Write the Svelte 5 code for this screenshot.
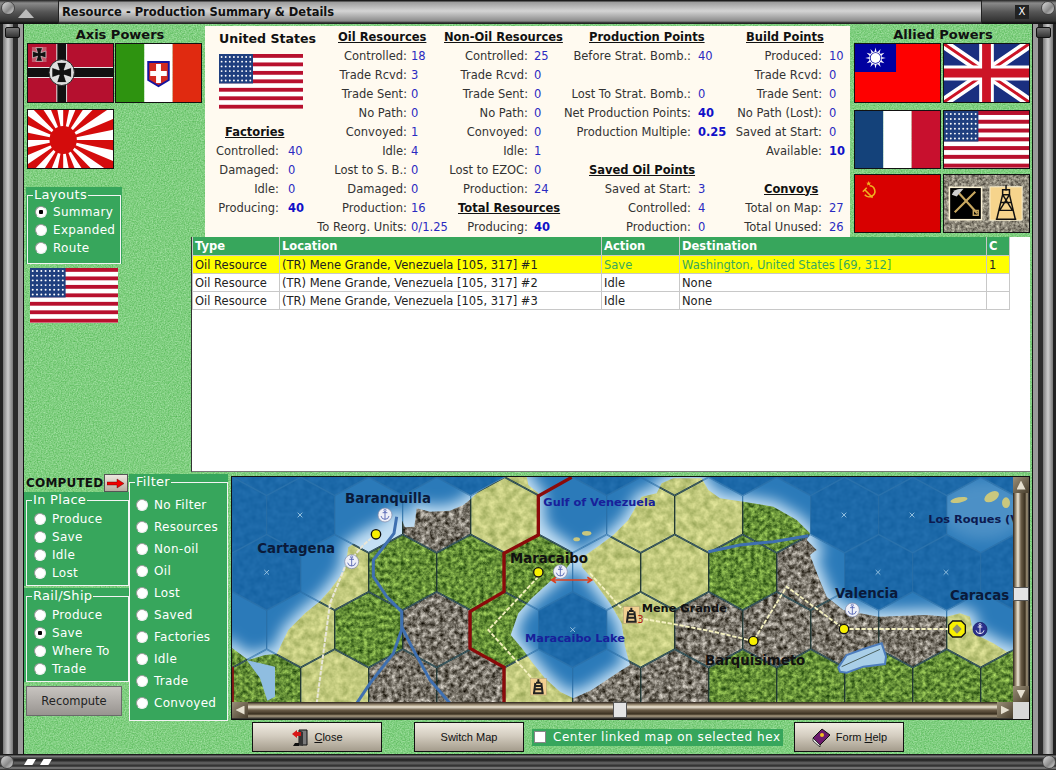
<script>
  let layout = $state('Summary')
  let inPlace = $state('')
  let railShip = $state('Save')
  let filter = $state('')
  let centerLinked = $state(false)

  const colA = [
    { h: 'Factories', x: 20 },
    { l: 'Controlled', v: '40' },
    { l: 'Damaged', v: '0' },
    { l: 'Idle', v: '0' },
    { l: 'Producing', v: '40', b: true }
  ]
  const colB = [
    { h: 'Oil Resources', x: 26 },
    { l: 'Controlled', v: '18' },
    { l: 'Trade Rcvd', v: '3' },
    { l: 'Trade Sent', v: '0' },
    { l: 'No Path', v: '0' },
    { l: 'Convoyed', v: '1' },
    { l: 'Idle', v: '4' },
    { l: 'Lost to S. B.', v: '0' },
    { l: 'Damaged', v: '0' },
    { l: 'Production', v: '16' },
    { l: 'To Reorg. Units', v: '0/1.25' }
  ]
  const colC = [
    { h: 'Non-Oil Resources', x: 4 },
    { l: 'Controlled', v: '25' },
    { l: 'Trade Rcvd', v: '0' },
    { l: 'Trade Sent', v: '0' },
    { l: 'No Path', v: '0' },
    { l: 'Convoyed', v: '0' },
    { l: 'Idle', v: '1' },
    { l: 'Lost to EZOC', v: '0' },
    { l: 'Production', v: '24' },
    { h: 'Total Resources', x: 18 },
    { l: 'Producing', v: '40', b: true }
  ]
  const colD = [
    { h: 'Production Points', x: 24 },
    { l: 'Before Strat. Bomb.', v: '40' },
    {},
    { l: 'Lost To Strat. Bomb.', v: '0' },
    { l: 'Net Production Points', v: '40', b: true },
    { l: 'Production Multiple', v: '0.25', b: true },
    {},
    { h: 'Saved Oil Points', x: 24 },
    { l: 'Saved at Start', v: '3' },
    { l: 'Controlled', v: '4' },
    { l: 'Production', v: '0' }
  ]
  const colE = [
    { h: 'Build Points', x: 21 },
    { l: 'Produced', v: '10' },
    { l: 'Trade Rcvd', v: '0' },
    { l: 'Trade Sent', v: '0' },
    { l: 'No Path (Lost)', v: '0' },
    { l: 'Saved at Start', v: '0' },
    { l: 'Available', v: '10', b: true },
    {},
    { h: 'Convoys', x: 39 },
    { l: 'Total on Map', v: '27' },
    { l: 'Total Unused', v: '26' }
  ]

  const units = [
    { n: 1, action: 'Save', dest: 'Washington, United States [69, 312]', c: '1', sel: true },
    { n: 2, action: 'Idle', dest: 'None', c: '' },
    { n: 3, action: 'Idle', dest: 'None', c: '' }
  ]

  // map is authored in 3x units, offset so it lines up with the hex grid
  const hexPts = (x, y) =>
    `${x},${y - 112} ${x + 102},${y - 57} ${x + 102},${y + 57} ${x},${y + 112} ${x - 102},${y + 57} ${x - 102},${y - 57}`

  const grid = [
    [-2, 'ddddsdsddddd'],
    [-1, 'dd.gs.ssfdd.'],
    [0, 'dsfffssfgddd'],
    [1, 'fsfgfdsggggs'],
    [2, 'fsggsggfffff']
  ]
  const hexes = grid.flatMap(([r, s]) =>
    [...s].map((t, k) => ({
      t,
      x: (r % 2 ? 8 : 110) + 204 * k,
      y: 307 + 172 * r,
      pts: hexPts((r % 2 ? 8 : 110) + 204 * k, 307 + 172 * r)
    }))
  )
  const ofType = (t) => hexes.filter((h) => h.t === t)

  const coast =
    '0,700 0,530 55,570 105,555 140,552 175,480 225,430 268,395 300,360 345,300 355,232 410,195 470,165 495,135 515,150 525,172 553,170 560,115 600,125 660,122 700,105 722,88 745,65 790,40 830,20 890,20 895,45 925,70 925,100 930,170 975,210 1020,240 1028,270 1005,300 965,330 905,385 865,430 842,495 880,540 905,575 945,625 990,665 1030,685 1085,660 1130,630 1175,600 1200,585 1185,530 1175,460 1140,400 1085,325 1055,290 1060,260 1110,225 1150,195 1195,150 1235,80 1280,70 1295,40 1330,25 1415,25 1435,60 1470,85 1540,95 1630,110 1700,150 1740,190 1730,210 1760,240 1740,255 1765,320 1790,380 1840,420 1945,440 2090,435 2150,440 2190,430 2220,440 2230,490 2290,520 2330,545 2350,540 2360,700'

  const rays = Array.from({ length: 16 }, (_, i) => {
    const a = (i * 22.5 * Math.PI) / 180
    const b = ((i * 22.5 + 11.25) * Math.PI) / 180
    return `0,0 ${95 * Math.cos(a)},${95 * Math.sin(a)} ${95 * Math.cos(b)},${95 * Math.sin(b)}`
  })
  const sunRays = Array.from({ length: 12 }, (_, i) => i * 30)
  const stars = Array.from({ length: 48 }, (_, i) => ({ x: 2.6 + (i % 8) * 4.1, y: 3 + Math.floor(i / 8) * 4.8 }))
  const stripes = [0, 2, 4, 6, 8, 10, 12]
  const ironCross = 'M-2,-2 L-4,-8 H4 L2,-2 L8,-4 V4 L2,2 L4,8 H-4 L-2,2 L-8,4 V-4 Z'
</script>

{#snippet usFlag()}
  <svg class="fill" viewBox="0 0 84 56" preserveAspectRatio="none">
    <rect width="84" height="56" fill="#fff" />
    {#each stripes as s}
      <rect y={s * 4.31} width="84" height="3.9" fill="#b8102e" />
    {/each}
    <rect width="34" height="30" fill="#1f3f7f" />
    {#each stars as st}
      <circle cx={st.x} cy={st.y} r=".95" fill="#fff" />
    {/each}
  </svg>
{/snippet}

{#snippet germany()}
  <svg class="fill" viewBox="0 0 87 58" preserveAspectRatio="none">
    <rect width="87" height="58" fill="#b5102f" />
    <rect x="29" width="11" height="58" fill="#e8e8e8" />
    <rect x="30" width="9" height="58" fill="#111" />
    <rect y="23" width="87" height="11" fill="#e8e8e8" />
    <rect y="24" width="87" height="9" fill="#111" />
    <circle cx="34.5" cy="28.5" r="13" fill="#ddd" stroke="#222" stroke-width="1" />
    <path d={ironCross} transform="translate(34.5 28.5) scale(1.25)" fill="#111" stroke="#fff" stroke-width=".5" />
    <rect x="4" y="3" width="15" height="15" fill="#ddd" opacity=".35" />
    <path d={ironCross} transform="translate(11.5 10.5) scale(.85)" fill="#111" stroke="#fff" stroke-width=".6" />
  </svg>
{/snippet}

{#snippet italy()}
  <svg class="fill" viewBox="0 0 87 58" preserveAspectRatio="none">
    <rect width="29" height="58" fill="#2e9310" />
    <rect x="29" width="29" height="58" fill="#fff" />
    <rect x="58" width="29" height="58" fill="#e02a10" />
    <path d="M33,18 H54 V36 L43.5,42 L33,36 Z" fill="#d22a20" stroke="#1414a0" stroke-width="2" />
    <rect x="41" y="20" width="5" height="19" fill="#fff" />
    <rect x="35" y="27" width="17" height="5" fill="#fff" />
  </svg>
{/snippet}

{#snippet japan()}
  <svg class="fill" viewBox="0 0 87 58" preserveAspectRatio="none">
    <rect width="87" height="58" fill="#fff" />
    <g transform="translate(36 30)" fill="#d40c0c">
      {#each rays as r}
        <polygon points={r} />
      {/each}
      <circle r="14" />
    </g>
  </svg>
{/snippet}

{#snippet taiwan()}
  <svg class="fill" viewBox="0 0 87 58" preserveAspectRatio="none">
    <rect width="87" height="58" fill="#fe0000" />
    <rect width="42" height="28" fill="#0000a0" />
    <g transform="translate(21 14)" fill="#fff">
      {#each sunRays as a}
        <polygon points="-1.1,-6 1.1,-6 0,-10.5" transform="rotate({a})" />
      {/each}
      <circle r="6.6" />
      <circle r="5.8" fill="#0000a0" />
      <circle r="5" />
    </g>
  </svg>
{/snippet}

{#snippet uk()}
  <svg class="fill" viewBox="0 0 87 58" preserveAspectRatio="none">
    <rect width="87" height="58" fill="#1a2f80" />
    <path d="M0,0 L87,58 M87,0 L0,58" stroke="#fff" stroke-width="10" />
    <path d="M0,0 L87,58 M87,0 L0,58" stroke="#cc1426" stroke-width="3" />
    <path d="M43.5,0 V58 M0,29 H87" stroke="#fff" stroke-width="15" />
    <path d="M43.5,0 V58 M0,29 H87" stroke="#cc1426" stroke-width="9" />
  </svg>
{/snippet}

{#snippet france()}
  <svg class="fill" viewBox="0 0 87 58" preserveAspectRatio="none">
    <rect width="29" height="58" fill="#14427a" />
    <rect x="29" width="29" height="58" fill="#fff" />
    <rect x="58" width="29" height="58" fill="#c8102e" />
  </svg>
{/snippet}

{#snippet ussr()}
  <svg class="fill" viewBox="0 0 87 58" preserveAspectRatio="none">
    <rect width="87" height="58" fill="#d80000" />
    <path d="M15,11 A5.5,5.5 0 0 1 18,21 A6,6 0 0 1 10,20 M10,15 L18,23 M8,17 L12,13" fill="none" stroke="#f0b020" stroke-width="1.6" />
    <path d="M14,6 l.8,1.8 1.8,0 -1.4,1.2 .5,1.8 -1.7,-1 -1.7,1 .5,-1.8 -1.4,-1.2 1.8,0z" fill="#f0b020" />
  </svg>
{/snippet}

{#snippet resourceIcons()}
  <svg class="fill" viewBox="0 0 87 58" preserveAspectRatio="none">
    <filter id="stone" color-interpolation-filters="sRGB">
      <feTurbulence type="fractalNoise" baseFrequency=".35" numOctaves="3" seed="4" />
      <feColorMatrix values=".8 0 0 0 .15  .8 0 0 0 .13  .75 0 0 0 .1  0 0 0 0 1" />
    </filter>
    <rect width="87" height="58" filter="url(#stone)" />
    <rect x="5.5" y="12.5" width="33" height="33" fill="#000" stroke="#fbf2d4" stroke-width="1.6" />
    <path d="M11,38 L32,17 M14,17 L34,39" stroke="#c9a860" stroke-width="2.2" />
    <path d="M8,20 Q10,13 20,14 L13,22 Z" fill="#cfcfcf" />
    <path d="M30,36 l5,0 0,5 -5,0 z" fill="none" stroke="#c9a860" stroke-width="1.5" />
    <rect x="47" y="12" width="33" height="34" fill="#f6d48c" stroke="#fbf2d4" stroke-width="1" />
    <path d="M63.5,10 V16 M60,15 H67 V20 H60 Z M60,20 L54,45 M67,20 L73,45 M58,28 H69 M56,36 H71 M60,20 L70,36 M67,20 L57,36 M53,45 H74" fill="none" stroke="#111" stroke-width="1.5" />
  </svg>
{/snippet}

{#snippet port(x, y, dark)}
  <g transform="translate({x} {y})">
    <circle r="21" fill={dark ? '#2a2f8a' : '#eef0f8'} stroke={dark ? '#16185a' : '#7f86a8'} stroke-width="2" />
    <path d="M0,-13 V13 M-7,-7 H7 M-12,3 Q-10,13 0,13 Q10,13 12,3" fill="none" stroke={dark ? '#fff' : '#5060b0'} stroke-width="2.6" />
    <circle cy="-14" r="3.4" fill="none" stroke={dark ? '#fff' : '#5060b0'} stroke-width="2" />
  </g>
{/snippet}

{#snippet city(x, y)}
  <circle cx={x} cy={y} r="14" fill="#f8f000" stroke="#111" stroke-width="4" />
{/snippet}

{#snippet derrick(x, y, n)}
  <g transform="translate({x} {y})">
    <rect x="-24" y="-25" width="48" height="50" fill="#f2cf90" stroke="#a89a70" stroke-width="1.5" />
    <path d="M0,-22 V-12 M-7,-12 H7 M-9,-11 L-13,20 M9,-11 L13,20 M-11,-2 H11 M-12,8 H12 M-16,20 H16" fill="none" stroke="#222" stroke-width="6" />
    {#if n}<text x="18" y="24" class="mapnum">{n}</text>{/if}
  </g>
{/snippet}

{#snippet radios(options, name, value, set)}
  {#each options as o}
    <label class="radio">
      <input type="radio" {name} value={o} checked={value === o} onchange={() => set(o)} />
      <span>{o}</span>
    </label>
  {/each}
{/snippet}

{#snippet statCol(rows)}
  {#each rows as r}
    {#if r.h}
      <div class="stat-head" style:margin-left="{r.x}px">{r.h}</div>
    {:else if r.l}
      <div class="stat-label">{r.l}:</div>
      <div class="stat-val" class:strong={r.b}>{r.v}</div>
    {:else}
      <div class="stat-gap"></div>
    {/if}
  {/each}
{/snippet}

<div class="window">
  <header class="titlebar">
    <div class="corner left">
      <span class="screw"></span>
      <span class="tri"></span>
    </div>
    <div class="title">Resource - Production Summary &amp; Details</div>
    <div class="corner right">
      <span class="closex">X</span>
      <span class="screw"></span>
    </div>
  </header>

  <div class="middle">
    <div class="frame"><span class="knob"></span></div>

    <main class="body">
      <div class="upper">
        <section class="axis">
          <h2>Axis Powers</h2>
          <div class="flags">
            <div class="flag">{@render germany()}</div>
            <div class="flag">{@render italy()}</div>
          </div>
        </section>

        <section class="rail">
          <div class="flag japan">{@render japan()}</div>
          <div class="group layouts">
            <fieldset>
              <legend>Layouts</legend>
              {@render radios(['Summary', 'Expanded', 'Route'], 'layout', layout, (v) => (layout = v))}
            </fieldset>
          </div>
          <div class="soft-us">{@render usFlag()}</div>
        </section>

        <section class="panel">
          <div class="col a">
            <div class="us">
              <h3>United States</h3>
              <div class="us-flag">{@render usFlag()}</div>
            </div>
            {@render statCol(colA)}
          </div>
          <div class="col b">{@render statCol(colB)}</div>
          <div class="col c">{@render statCol(colC)}</div>
          <div class="col d">{@render statCol(colD)}</div>
          <div class="col e">{@render statCol(colE)}</div>
        </section>

        <section class="allied">
          <h2>Allied Powers</h2>
          <div class="flags">
            <div class="flag">{@render taiwan()}</div>
            <div class="flag">{@render uk()}</div>
          </div>
          <div class="flags second">
            <div class="flag">{@render france()}</div>
            <div class="flag">{@render usFlag()}</div>
          </div>
          <div class="flags third">
            <div class="flag">{@render ussr()}</div>
            <div class="flag">{@render resourceIcons()}</div>
          </div>
        </section>

        <section class="tablewrap">
          <table>
            <thead>
              <tr>
                <th class="t1">Type</th>
                <th class="t2">Location</th>
                <th class="t3">Action</th>
                <th class="t4">Destination</th>
                <th class="t5">C</th>
              </tr>
            </thead>
            <tbody>
              {#each units as u}
                <tr class:sel={u.sel}>
                  <td>Oil Resource</td>
                  <td>(TR) Mene Grande, Venezuela [105, 317] #{u.n}</td>
                  <td class="act">{u.action}</td>
                  <td class="act">{u.dest}</td>
                  <td>{u.c}</td>
                </tr>
              {/each}
            </tbody>
          </table>
        </section>
      </div>

      <div class="lower">
        <section class="controls">
          <div class="computed">
            <b>COMPUTED</b>
            <button class="arrow" aria-label="Next">
              <svg width="18" height="11" viewBox="0 0 18 11">
                <path d="M0,4 H10 V1 L17,5.5 L10,10 V7 H0 Z" fill="#f00000" stroke="#400" stroke-width=".4" />
              </svg>
            </button>
          </div>
          <div class="group">
            <fieldset>
              <legend>In Place</legend>
              {@render radios(['Produce', 'Save', 'Idle', 'Lost'], 'inplace', inPlace, (v) => (inPlace = v))}
            </fieldset>
          </div>
          <div class="group railship">
            <fieldset>
              <legend>Rail/Ship</legend>
              {@render radios(['Produce', 'Save', 'Where To', 'Trade'], 'rail', railShip, (v) => (railShip = v))}
            </fieldset>
          </div>
          <button class="recompute">Recompute</button>
        </section>

        <section class="group filter">
          <fieldset>
            <legend>Filter</legend>
            {@render radios(
              ['No Filter', 'Resources', 'Non-oil', 'Oil', 'Lost', 'Saved', 'Factories', 'Idle', 'Trade', 'Convoyed'],
              'filter',
              filter,
              (v) => (filter = v)
            )}
          </fieldset>
        </section>

        <section class="mapbox">
          <svg class="map" viewBox="6 21 2343 675" preserveAspectRatio="none">
            <defs>
              <filter id="tSea" color-interpolation-filters="sRGB">
                <feTurbulence type="fractalNoise" baseFrequency=".05" numOctaves="2" seed="2" />
                <feColorMatrix values=".08 0 0 0 .07  .08 0 0 0 .37  .08 0 0 0 .62  0 0 0 0 1" />
              </filter>
              <filter id="tSand" color-interpolation-filters="sRGB">
                <feTurbulence type="fractalNoise" baseFrequency=".045" numOctaves="3" seed="7" />
                <feColorMatrix values=".4 0 0 0 .56  .34 0 0 0 .62  .36 0 0 0 .31  0 0 0 0 1" />
              </filter>
              <filter id="tForest" color-interpolation-filters="sRGB">
                <feTurbulence type="fractalNoise" baseFrequency=".08" numOctaves="3" seed="11" />
                <feColorMatrix values=".75 0 0 0 .02  .8 0 0 0 .16  .45 0 0 0 -.01  0 0 0 0 1" />
              </filter>
              <filter id="tGray" color-interpolation-filters="sRGB">
                <feTurbulence type="fractalNoise" baseFrequency=".07" numOctaves="4" seed="5" />
                <feColorMatrix values="1.1 0 0 0 -.07  1.1 0 0 0 -.09  1.1 0 0 0 -.13  0 0 0 0 1" />
              </filter>
              <filter id="glow" x="-10%" y="-30%" width="120%" height="160%">
                <feGaussianBlur stdDeviation="20" />
              </filter>
              <clipPath id="cLand"><polygon points={coast} /></clipPath>
              <clipPath id="cSand">
                {#each ofType('s') as h}<polygon points={h.pts} />{/each}
              </clipPath>
              <clipPath id="cForest">
                {#each ofType('f') as h}<polygon points={h.pts} />{/each}
              </clipPath>
              <clipPath id="cGray">
                {#each ofType('g') as h}<polygon points={h.pts} />{/each}
              </clipPath>
              <clipPath id="cDeep">
                {#each ofType('d') as h}<polygon points={h.pts} />{/each}
              </clipPath>
            </defs>

            <rect x="0" y="0" width="2360" height="700" fill="#2b7ab9" />
            <polygon points={coast} fill="#c4e0f4" stroke="#c4e0f4" stroke-width="36" filter="url(#glow)" />
            <ellipse cx="2260" cy="120" rx="130" ry="90" fill="#7fb2da" opacity=".4" filter="url(#glow)" />
            <g clip-path="url(#cDeep)">
              <rect x="0" y="0" width="2360" height="700" filter="url(#tSea)" />
            </g>
            {#each [[210, 135], [110, 307], [1028, 479], [1842, 135], [2046, 135], [1944, 307], [2148, 307]] as [x, y]}
              <path d="M{x - 7},{y - 7} L{x + 7},{y + 7} M{x + 7},{y - 7} L{x - 7},{y + 7}" stroke="#a8cfe8" stroke-width="2.5" />
            {/each}

            <g clip-path="url(#cLand)">
              <g clip-path="url(#cSand)"><rect x="0" y="0" width="2360" height="700" filter="url(#tSand)" /></g>
              <g clip-path="url(#cForest)"><rect x="0" y="0" width="2360" height="700" filter="url(#tForest)" /></g>
              <g clip-path="url(#cGray)"><rect x="0" y="0" width="2360" height="700" filter="url(#tGray)" /></g>
            </g>

            <!-- islands -->
            <g fill="#c9c77e">
              <ellipse cx="2187" cy="90" rx="26" ry="8" transform="rotate(-10 2187 90)" />
              <ellipse cx="2285" cy="80" rx="24" ry="14" transform="rotate(-30 2285 80)" />
              <ellipse cx="2328" cy="98" rx="12" ry="16" />
              <ellipse cx="1070" cy="190" rx="14" ry="7" />
              <ellipse cx="1040" cy="208" rx="10" ry="6" />
            </g>

            <!-- hex lines -->
            <g fill="none" stroke="#2a6ea6" stroke-width="2">
              {#each hexes as h}<polygon points={h.pts} />{/each}
            </g>
            <g fill="none" stroke="#1d2a18" stroke-width="2" clip-path="url(#cLand)">
              {#each hexes as h}<polygon points={h.pts} />{/each}
            </g>

            <!-- inlet and small lake -->
            <path d="M50,570 L135,590 L135,680 L112,692 L90,625 Z" fill="#8fbde0" />
            <path d="M1825,592 L1850,555 L1900,537 L1955,520 L1968,560 L1965,582 L1900,590 L1850,608 L1830,605 Z" fill="#a9cfe8" stroke="#4c7cbc" stroke-width="6" />
            <path d="M1835,590 L1950,538" stroke="#1d2a18" stroke-width="2" />

            <!-- rivers -->
            <g fill="none" stroke="#3f70b0" stroke-width="9">
              <path d="M500,140 L492,190 L430,270 L430,320 L470,380 L515,425 L515,480 L490,550 L420,640 L380,700" />
              <path d="M515,470 L545,530 L600,630 L660,700" />
              <path d="M1435,245 L1530,225 L1630,215 L1735,197" />
            </g>

            <!-- border -->
            <path d="M1025,22 L925,78 V195 L822,250 V365 L720,425 V535 L822,592 V700" fill="none" stroke="#8b0a0a" stroke-width="10" />
            <path d="M9,590 V700" stroke="#8b0a0a" stroke-width="5" />

            <!-- routes -->
            <g fill="none" stroke="#f6f2c0" stroke-width="5.5" stroke-dasharray="13 5">
              <path d="M925,320 L775,480 L920,640" />
              <path d="M1080,310 L1170,410 L1230,445 L1330,462 L1450,485 L1570,513 L1670,350 L1842,477 L2181,477" />
            </g>
            <path d="M438,193 L400,225 L345,290 L300,400 L280,550 L260,700" fill="none" stroke="#e8e6d8" stroke-width="6" stroke-dasharray="13 4" />
            <path d="M965,330 H1085 M978,322 L965,330 L978,338 M1072,322 L1085,330 L1072,338" fill="none" stroke="#d84020" stroke-width="5" />

            {@render derrick(1204, 435, '3')}
            {@render derrick(925, 650)}
            {@render city(438, 193)}
            {@render city(925, 307)}
            {@render city(1570, 513)}
            {@render city(1842, 477)}
            <polygon points="2168,453 2194,453 2206,465 2206,489 2194,501 2168,501 2156,489 2156,465" fill="#f8f000" stroke="#111" stroke-width="4" />
            <polygon points="2181,463 2195,477 2181,491 2167,477" fill="#8f8f70" />
            {@render port(465, 135)}
            {@render port(365, 275)}
            {@render port(991, 305)}
            {@render port(1867, 420)}
            {@render port(2250, 478, true)}

            <g class="big">
              <text x="345" y="98">Baranquilla</text>
              <text x="82" y="248">Cartagena</text>
              <text x="840" y="278" fill="#111">Maracaibo</text>
              <text x="1815" y="383">Valencia</text>
              <text x="1425" y="584" fill="#111">Barquisimeto</text>
              <text x="2160" y="391">Caracas</text>
            </g>
            <g class="small">
              <text x="940" y="108" fill="#18209a">Gulf of Venezuela</text>
              <text x="885" y="516" fill="#18209a">Maracaibo Lake</text>
              <text x="1235" y="426" fill="#111">Mene Grande</text>
              <text x="2095" y="159" fill="#0c1a50">Los Roques (V</text>
            </g>
          </svg>

          <div class="vscroll">
            <span class="sbtn"><i class="up"></i></span>
            <div class="vtrack"><span class="vthumb"></span></div>
            <span class="sbtn"><i class="down"></i></span>
          </div>
          <div class="hscroll">
            <span class="sbtn"><i class="lf"></i></span>
            <div class="htrack"><span class="hthumb"></span></div>
            <span class="sbtn"><i class="rt"></i></span>
          </div>
          <div class="scorner"></div>
        </section>
      </div>

      <div class="buttons">
        <button class="btn close">
          <svg width="18" height="19" viewBox="0 0 18 19">
            <path d="M8,2 H16 V17 H8 Z" fill="#7a7a7a" stroke="#111" />
            <path d="M8,2 L12,4 V18 L8,17 Z" fill="#333" />
            <path d="M1,6 L6,2 L6,4 H10 V8 H6 V10 Z" fill="#d81818" />
            <path d="M2,18 H8 V15 H4 Z" fill="#111" />
          </svg>
          <span><u>C</u>lose</span>
        </button>
        <button class="btn switch">Switch Map</button>
        <label class="center">
          <input type="checkbox" bind:checked={centerLinked} />
          <span>Center linked map on selected hex</span>
        </label>
        <button class="btn help">
          <svg width="20" height="20" viewBox="0 0 20 20">
            <path d="M2,11 L11,2 L19,8 L9,18 Z" fill="#6c1a6c" stroke="#111" />
            <path d="M2,11 L9,18 V20 L2,14 Z" fill="#e8e8e8" stroke="#111" stroke-width=".7" />
            <circle cx="11" cy="8" r="2" fill="#f0c020" />
          </svg>
          <span>Form <u>H</u>elp</span>
        </button>
      </div>
    </main>

    <div class="frame mirror"><span class="knob"></span></div>
  </div>

  <footer class="bottombar">
    <span class="screw"></span>
    <span class="nick a"></span>
    <span class="nick b"></span>
    <span class="spacer"></span>
    <span class="screw"></span>
  </footer>
</div>

<style>
  :global(body) {
    margin: 0;
    background: #333;
  }

  .window {
    width: 1056px;
    height: 770px;
    display: flex;
    flex-direction: column;
    overflow: hidden;
    font-family: 'DejaVu Sans', Verdana, sans-serif;
    font-size: 11.5px;
    color: #222;
  }

  /* title bar */
  .titlebar {
    height: 24px;
    flex: none;
    display: flex;
    background: linear-gradient(#1c1c1c 0, #1c1c1c 1px, #9a9a9a 2px, #d4d4d4 11px, #8c8c8c 21px, #222 23px);
  }
  .corner {
    position: relative;
    flex: none;
    background: linear-gradient(#222 0, #8a8a8a 3px, #555 12px, #333 21px, #111 23px);
  }
  .corner.left {
    width: 58px;
    border-right: 1px solid #222;
  }
  .corner.right {
    width: 74px;
    margin-left: auto;
    border-left: 1px solid #222;
  }
  .corner .tri {
    position: absolute;
    left: 18px;
    top: 9px;
    width: 16px;
    height: 9px;
    background: #bbb;
    clip-path: polygon(0 100%, 50% 0, 100% 100%);
  }
  .closex {
    position: absolute;
    left: 33px;
    top: 5px;
    width: 14px;
    height: 14px;
    color: #fff;
    font-size: 10px;
    line-height: 14px;
    text-align: center;
    background: #222;
  }
  .screw {
    display: block;
    width: 14px;
    height: 14px;
    border-radius: 50%;
    background: linear-gradient(135deg, #ddd, #888 60%, #ddd);
    border: 1px solid #444;
    box-sizing: border-box;
  }
  .corner.left .screw {
    position: absolute;
    left: 1px;
    top: 1px;
  }
  .corner.right .screw {
    position: absolute;
    right: 1px;
    top: 1px;
  }
  .title {
    padding-left: 3px;
    font-weight: bold;
    line-height: 24px;
    color: #111;
  }

  .middle {
    flex: 1;
    display: flex;
    min-height: 0;
  }

  .frame {
    position: relative;
    width: 24px;
    flex: none;
    background: linear-gradient(
      90deg,
      #222 0 3px,
      #777 3px,
      #ccc 8px,
      #777 13px,
      #2b2b2b 13px 18px,
      #9a9a9a 18px 23px,
      #111 23px
    );
  }
  .frame.mirror {
    transform: scaleX(-1);
  }
  .knob {
    position: absolute;
    left: 5px;
    top: 3px;
    width: 15px;
    height: 11px;
    border-radius: 2px;
    background: linear-gradient(#777, #333);
    border: 1px solid #111;
    box-sizing: border-box;
  }

  .body {
    flex: 1;
    min-width: 0;
    display: flex;
    flex-direction: column;
    background: #80cf80
      url("data:image/svg+xml,%3Csvg xmlns='http://www.w3.org/2000/svg' width='256' height='256'%3E%3Cfilter id='n' color-interpolation-filters='sRGB'%3E%3CfeTurbulence type='fractalNoise' baseFrequency='.75' numOctaves='2' stitchTiles='stitch'/%3E%3CfeColorMatrix values='.4 0 0 0 .3 .22 0 0 0 .7 .4 0 0 0 .3 0 0 0 0 1'/%3E%3C/filter%3E%3Crect width='256' height='256' filter='url(%23n)'/%3E%3C/svg%3E");
  }

  .upper {
    height: 448px;
    flex: none;
    box-sizing: border-box;
    padding-top: 2px;
    display: grid;
    grid-template-columns: 168px 13px 645px 182px;
    grid-template-rows: 80px 131px 235px;
  }

  h2 {
    margin: 0;
    height: 17px;
    font-size: 13px;
    line-height: 18px;
    text-align: center;
    color: #111;
  }

  .axis {
    grid-column: 1 / 3;
    grid-row: 1;
    padding-left: 3px;
  }
  .axis h2 {
    margin-left: 8px;
  }
  .flags {
    display: flex;
    gap: 1px;
  }
  .allied .flags {
    gap: 2px;
  }
  .flag {
    width: 87px;
    height: 60px;
    flex: none;
    box-sizing: border-box;
    border: 1.5px solid #111;
  }
  .fill {
    display: block;
    width: 100%;
    height: 100%;
  }

  .rail {
    grid-column: 1;
    grid-row: 2 / 4;
    padding: 3px 0 0 3px;
  }
  .layouts {
    width: 96px;
    margin: 18px 0 0 -1px;
  }
  .layouts fieldset {
    margin-left: 1px;
    margin-right: 1px;
    padding: 0 6px 6px 7px;
  }
  .soft-us {
    width: 88px;
    height: 55px;
    margin: 4px 0 0 3px;
    filter: blur(.3px);
  }

  /* grouped radio boxes */
  .group {
    background: #37a65c;
    color: #fff;
  }
  fieldset {
    margin: 0 0 0 2px;
    padding: 2px 0 3px 7px;
    border: 1.5px solid #f4f4f4;
    min-width: 0;
    font-size: 12px;
    letter-spacing: .3px;
  }
  legend {
    margin-left: -2px;
    padding: 0 1px;
    height: 16px;
    line-height: 15px;
    font-size: 13px;
  }
  .radio {
    display: flex;
    align-items: center;
    gap: 6px;
    height: 18px;
    white-space: nowrap;
  }
  input[type='radio'] {
    appearance: none;
    margin: 0;
    width: 12px;
    height: 12px;
    flex: none;
    box-sizing: border-box;
    border-radius: 50%;
    background: #fff;
    border: 1px solid #9a9a9a;
    border-right-color: #eee;
    border-bottom-color: #eee;
  }
  input[type='radio']:checked {
    background: radial-gradient(circle, #000 0 2px, #fff 2.5px);
  }

  /* stats panel */
  .panel {
    grid-column: 3;
    grid-row: 1 / 3;
    display: flex;
    box-sizing: border-box;
    padding-top: 1px;
    background: #fffaf0;
  }
  .col {
    display: grid;
    grid-auto-rows: 19px;
    align-items: center;
    align-content: start;
  }
  .col.a {
    width: 107px;
    grid-template-columns: 74px 1fr;
    column-gap: 9px;
  }
  .col.b {
    width: 128px;
    grid-template-columns: 95px 1fr;
    column-gap: 4px;
  }
  .col.c {
    width: 125px;
    grid-template-columns: 88px 1fr;
    column-gap: 6px;
  }
  .col.d {
    width: 160px;
    grid-template-columns: 126px 1fr;
    column-gap: 7px;
  }
  .col.e {
    width: 125px;
    grid-template-columns: 97px 1fr;
    column-gap: 7px;
  }
  .us {
    grid-column: 1 / -1;
    grid-row: span 5;
    align-self: start;
    height: 95px;
    padding-left: 14px;
  }
  h3 {
    margin: 0;
    height: 27px;
    font-size: 12.6px;
    line-height: 24px;
    color: #111;
    white-space: nowrap;
  }
  .us-flag {
    width: 84px;
    height: 55px;
  }
  .stat-head {
    grid-column: 1 / -1;
    font-weight: bold;
    text-decoration: underline;
    color: #111;
    white-space: nowrap;
  }
  .stat-gap {
    grid-column: 1 / -1;
  }
  .stat-label {
    display: flex;
    justify-content: flex-end;
    color: #333;
    white-space: nowrap;
  }
  .stat-val {
    color: #2a2ac0;
    white-space: nowrap;
  }
  .stat-val.strong {
    color: #1010c8;
    font-weight: bold;
  }

  .allied {
    grid-column: 4;
    grid-row: 1 / 3;
    padding-left: 4px;
    box-sizing: border-box;
  }
  .flags.second {
    margin-top: 7px;
  }
  .flags.second .flag,
  .flags.third .flag {
    height: 59px;
  }
  .flags.third {
    margin-top: 5px;
  }

  /* table */
  .tablewrap {
    grid-column: 2 / 5;
    grid-row: 3;
    margin: 0 2px 0 -1px;
    background: #fff;
    border-left: 1px solid #333;
    border-bottom: 1px solid #777;
    box-sizing: border-box;
  }
  .axis,
  .rail {
    min-width: 0;
  }
  table {
    border-collapse: collapse;
    table-layout: fixed;
    width: 817px;
  }
  th {
    height: 18px;
    padding: 0 2px;
    background: #37a65c;
    color: #fff;
    font-size: 11.5px;
    font-weight: bold;
    text-align: left;
    border: 1px solid #c8c8c8;
    border-top: 0;
  }
  td {
    height: 17px;
    padding: 0 2px;
    border: 1px solid #c8c8c8;
    border-top: 0;
    white-space: nowrap;
    color: #222;
  }
  .t1 {
    width: 82px;
  }
  .t2 {
    width: 317px;
  }
  .t3 {
    width: 73px;
  }
  .t4 {
    width: 302px;
  }
  .t5 {
    width: 18px;
  }
  tr.sel td {
    background: #ffff00;
    color: #222;
  }
  tr.sel td.act {
    color: #3aa85e;
  }

  /* lower half */
  .lower {
    height: 250px;
    flex: none;
    display: flex;
    align-items: flex-start;
  }
  .controls {
    width: 105px;
    flex: none;
    padding-top: 2px;
  }
  .computed {
    display: flex;
    align-items: center;
    justify-content: space-between;
    height: 18px;
    padding: 0 1px 0 2px;
    font-size: 12px;
    color: #111;
  }
  .computed b {
    letter-spacing: .2px;
  }
  .arrow {
    width: 24px;
    height: 18px;
    padding: 0;
    display: flex;
    align-items: center;
    justify-content: center;
    background: linear-gradient(#efe8e0, #b8aca0);
    border: 1px solid #555;
  }
  .railship {
    margin-top: 2px;
  }
  .recompute {
    display: block;
    width: 96px;
    height: 30px;
    margin: 4px 0 0 2px;
    padding: 0;
    font: 11.5px 'DejaVu Sans', sans-serif;
    color: #222;
    background: linear-gradient(#c8c4c0, #989490);
    border: 1px solid #6a6a6a;
  }
  .filter {
    width: 99px;
    margin-top: 2px;
    flex: none;
  }
  .filter fieldset {
    margin: 0;
    padding: 4px 0 6px 6px;
    box-sizing: border-box;
  }
  .filter legend {
    margin-left: -1px;
  }
  .filter .radio {
    height: 22px;
  }
  .mapbox {
    width: 799px;
    height: 244px;
    flex: none;
    margin: 4px 0 0 3px;
    box-sizing: border-box;
    border: 1px solid #111;
    display: grid;
    grid-template-columns: 781px 16px;
    grid-template-rows: 225px 17px;
  }
  .map {
    display: block;
    width: 781px;
    height: 225px;
  }
  .mapbox text {
    font-family: 'DejaVu Sans', sans-serif;
    font-weight: bold;
  }
  .big {
    font-size: 40px;
    fill: #0a1a3a;
  }
  .small {
    font-size: 34px;
  }
  .mapnum {
    font-size: 30px;
    font-weight: normal !important;
    fill: #b02010;
  }

  /* scrollbars */
  .vscroll {
    display: flex;
    flex-direction: column;
    background: linear-gradient(90deg, #2a2018, #a89a80 3px, #efe8d8 5px, #6b5d48 8px, #3a3020 12px, #a89a80 14px, #222);
  }
  .hscroll {
    display: flex;
    background: linear-gradient(#2a2018, #a89a80 3px, #efe8d8 5px, #6b5d48 8px, #3a3020 12px, #a89a80 14px, #222);
  }
  .sbtn {
    width: 16px;
    height: 16px;
    flex: none;
    display: flex;
    align-items: center;
    justify-content: center;
    background: linear-gradient(135deg, #9a8f78, #4a3f2e);
  }
  .sbtn i {
    width: 9px;
    height: 9px;
    background: #e6e0d0;
  }
  .up {
    clip-path: polygon(50% 0, 100% 100%, 0 100%);
  }
  .down {
    clip-path: polygon(0 0, 100% 0, 50% 100%);
  }
  .lf {
    clip-path: polygon(100% 0, 100% 100%, 0 50%);
  }
  .rt {
    clip-path: polygon(0 0, 100% 50%, 0 100%);
  }
  .vtrack {
    flex: 1;
    padding-top: 94px;
  }
  .vthumb {
    display: block;
    height: 14px;
    background: #e4e4e4;
    border: 1px solid #555;
    box-sizing: border-box;
  }
  .htrack {
    flex: 1;
    padding-left: 365px;
  }
  .hthumb {
    display: block;
    width: 14px;
    height: 16px;
    background: #e4e4e4;
    border: 1px solid #555;
    box-sizing: border-box;
  }
  .scorner {
    background: #d8d8d8;
  }

  /* bottom buttons */
  .buttons {
    flex: none;
    display: flex;
    align-items: center;
    height: 30px;
    padding-left: 228px;
  }
  .btn {
    height: 30px;
    box-sizing: border-box;
    padding: 0;
    display: flex;
    align-items: center;
    justify-content: center;
    gap: 3px;
    font: 11px 'Liberation Sans', Arial, sans-serif;
    color: #111;
    background: linear-gradient(#f0ebe2, #d4cdc0 45%, #a49c8c);
    border: 1px solid #111;
  }
  .btn.close {
    width: 130px;
    gap: 5px;
  }
  .btn.switch {
    width: 110px;
    margin-left: 32px;
  }
  .btn.help {
    width: 110px;
    margin-left: 11px;
    gap: 5px;
  }
  .center {
    width: 251px;
    height: 17px;
    margin-left: 8px;
    display: flex;
    align-items: center;
    gap: 7px;
    background: #37a65c;
    color: #fff;
    font-size: 12px;
    letter-spacing: .55px;
    white-space: nowrap;
    padding-left: 2px;
    box-sizing: border-box;
  }
  input[type='checkbox'] {
    appearance: none;
    margin: 0;
    width: 12px;
    height: 12px;
    flex: none;
    background: #fff;
    border: 1px solid #888;
    box-sizing: border-box;
  }

  .bottombar {
    height: 16px;
    flex: none;
    display: flex;
    align-items: center;
    background: linear-gradient(#1a1a1a 0 1px, #8a8a8a 2px, #444 4px, #1f1f1f 6px, #666 9px, #2a2a2a 12px, #8a8a8a 14px, #222 16px);
  }
  .spacer {
    flex: 1;
  }
  .nick {
    width: 12px;
    height: 6px;
    margin-left: 4px;
    background: #fff;
    clip-path: polygon(30% 0, 100% 0, 70% 100%, 0 100%);
  }
  .nick.a {
    margin-left: 10px;
  }
</style>
